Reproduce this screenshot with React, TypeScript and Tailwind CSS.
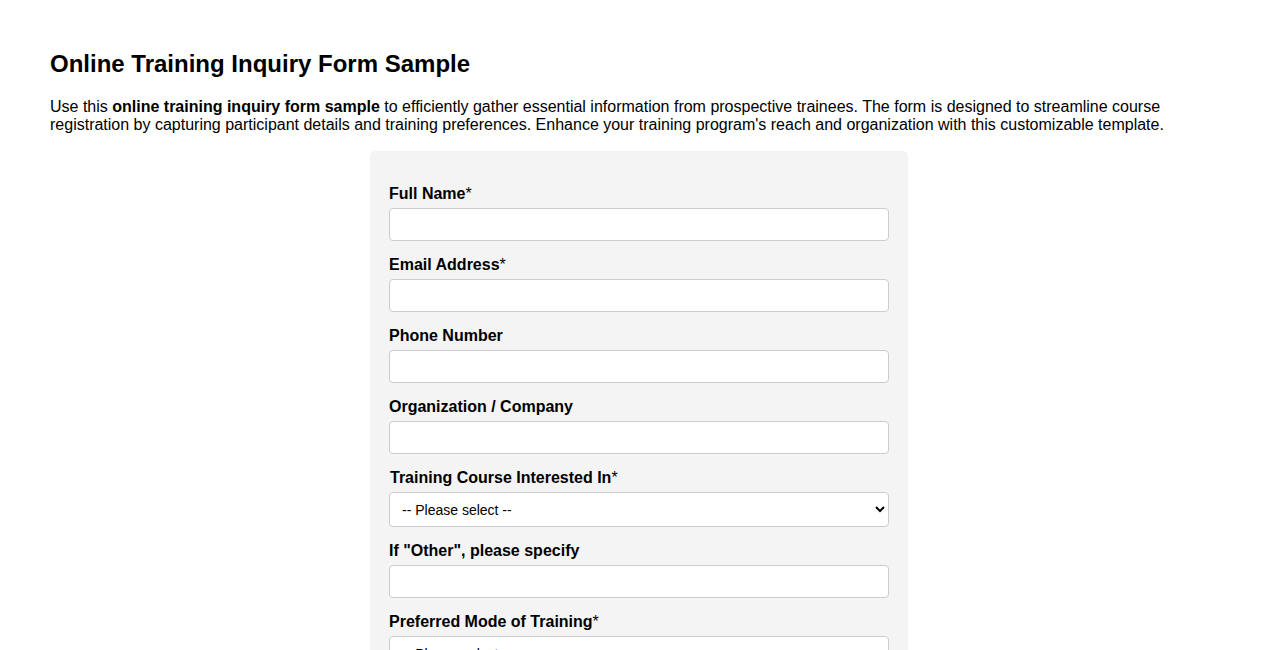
import type { ReactNode } from 'react'

const font = { fontFamily: '"Liberation Sans", Arial, sans-serif' }

function Field({ label, required, children }: { label: ReactNode; required?: boolean; children: ReactNode }) {
  return (
    <div className="mb-[15px]">
      <label className="block text-[16px] leading-[18px] font-bold text-black mb-[5px]">
        {label}
        {required && <span className="font-normal">*</span>}
      </label>
      {children}
    </div>
  )
}

function TextInput() {
  return (
    <input
      type="text"
      className="block w-full h-[33px] rounded-[4px] border border-[#cccccc] bg-white px-[10px] text-[14px]"
    />
  )
}

function Select() {
  return (
    <select className="block w-full h-[35px] rounded-[4px] border border-[#cccccc] bg-white pl-[8px] pr-[4px] text-[14px] text-black">
      <option>-- Please select --</option>
      <option>Web Development</option>
      <option>Data Analysis</option>
      <option>Project Management</option>
      <option>Other</option>
    </select>
  )
}

export default function App() {
  return (
    <div className="min-h-screen bg-white text-black px-[50px] pt-[50px] pb-10" style={font}>
      <h2 className="text-[24px] leading-[28px] font-bold">Online Training Inquiry Form Sample</h2>
      <p className="mt-[20px] text-[16px] leading-[18px]">
        Use this <strong>online training inquiry form sample</strong> to efficiently gather essential information
        from prospective trainees. The form is designed to streamline course registration by capturing participant
        details and training preferences. Enhance your training program's reach and organization with this
        customizable template.
      </p>
      <form className="mx-auto mt-[17px] w-[538px] rounded-[5px] bg-[#f4f4f4] px-[19px] pt-[34px] pb-[20px]">
        <Field label="Full Name" required>
          <TextInput />
        </Field>
        <Field label="Email Address" required>
          <TextInput />
        </Field>
        <Field label="Phone Number">
          <TextInput />
        </Field>
        <Field label="Organization / Company">
          <TextInput />
        </Field>
        <Field label={<span className="pl-px">Training Course Interested In</span>} required>
          <Select />
        </Field>
        <Field label={'If "Other", please specify'}>
          <TextInput />
        </Field>
        <Field label="Preferred Mode of Training" required>
          <Select />
        </Field>
        <Field label="Preferred Start Date">
          <TextInput />
        </Field>
      </form>
    </div>
  )
}
